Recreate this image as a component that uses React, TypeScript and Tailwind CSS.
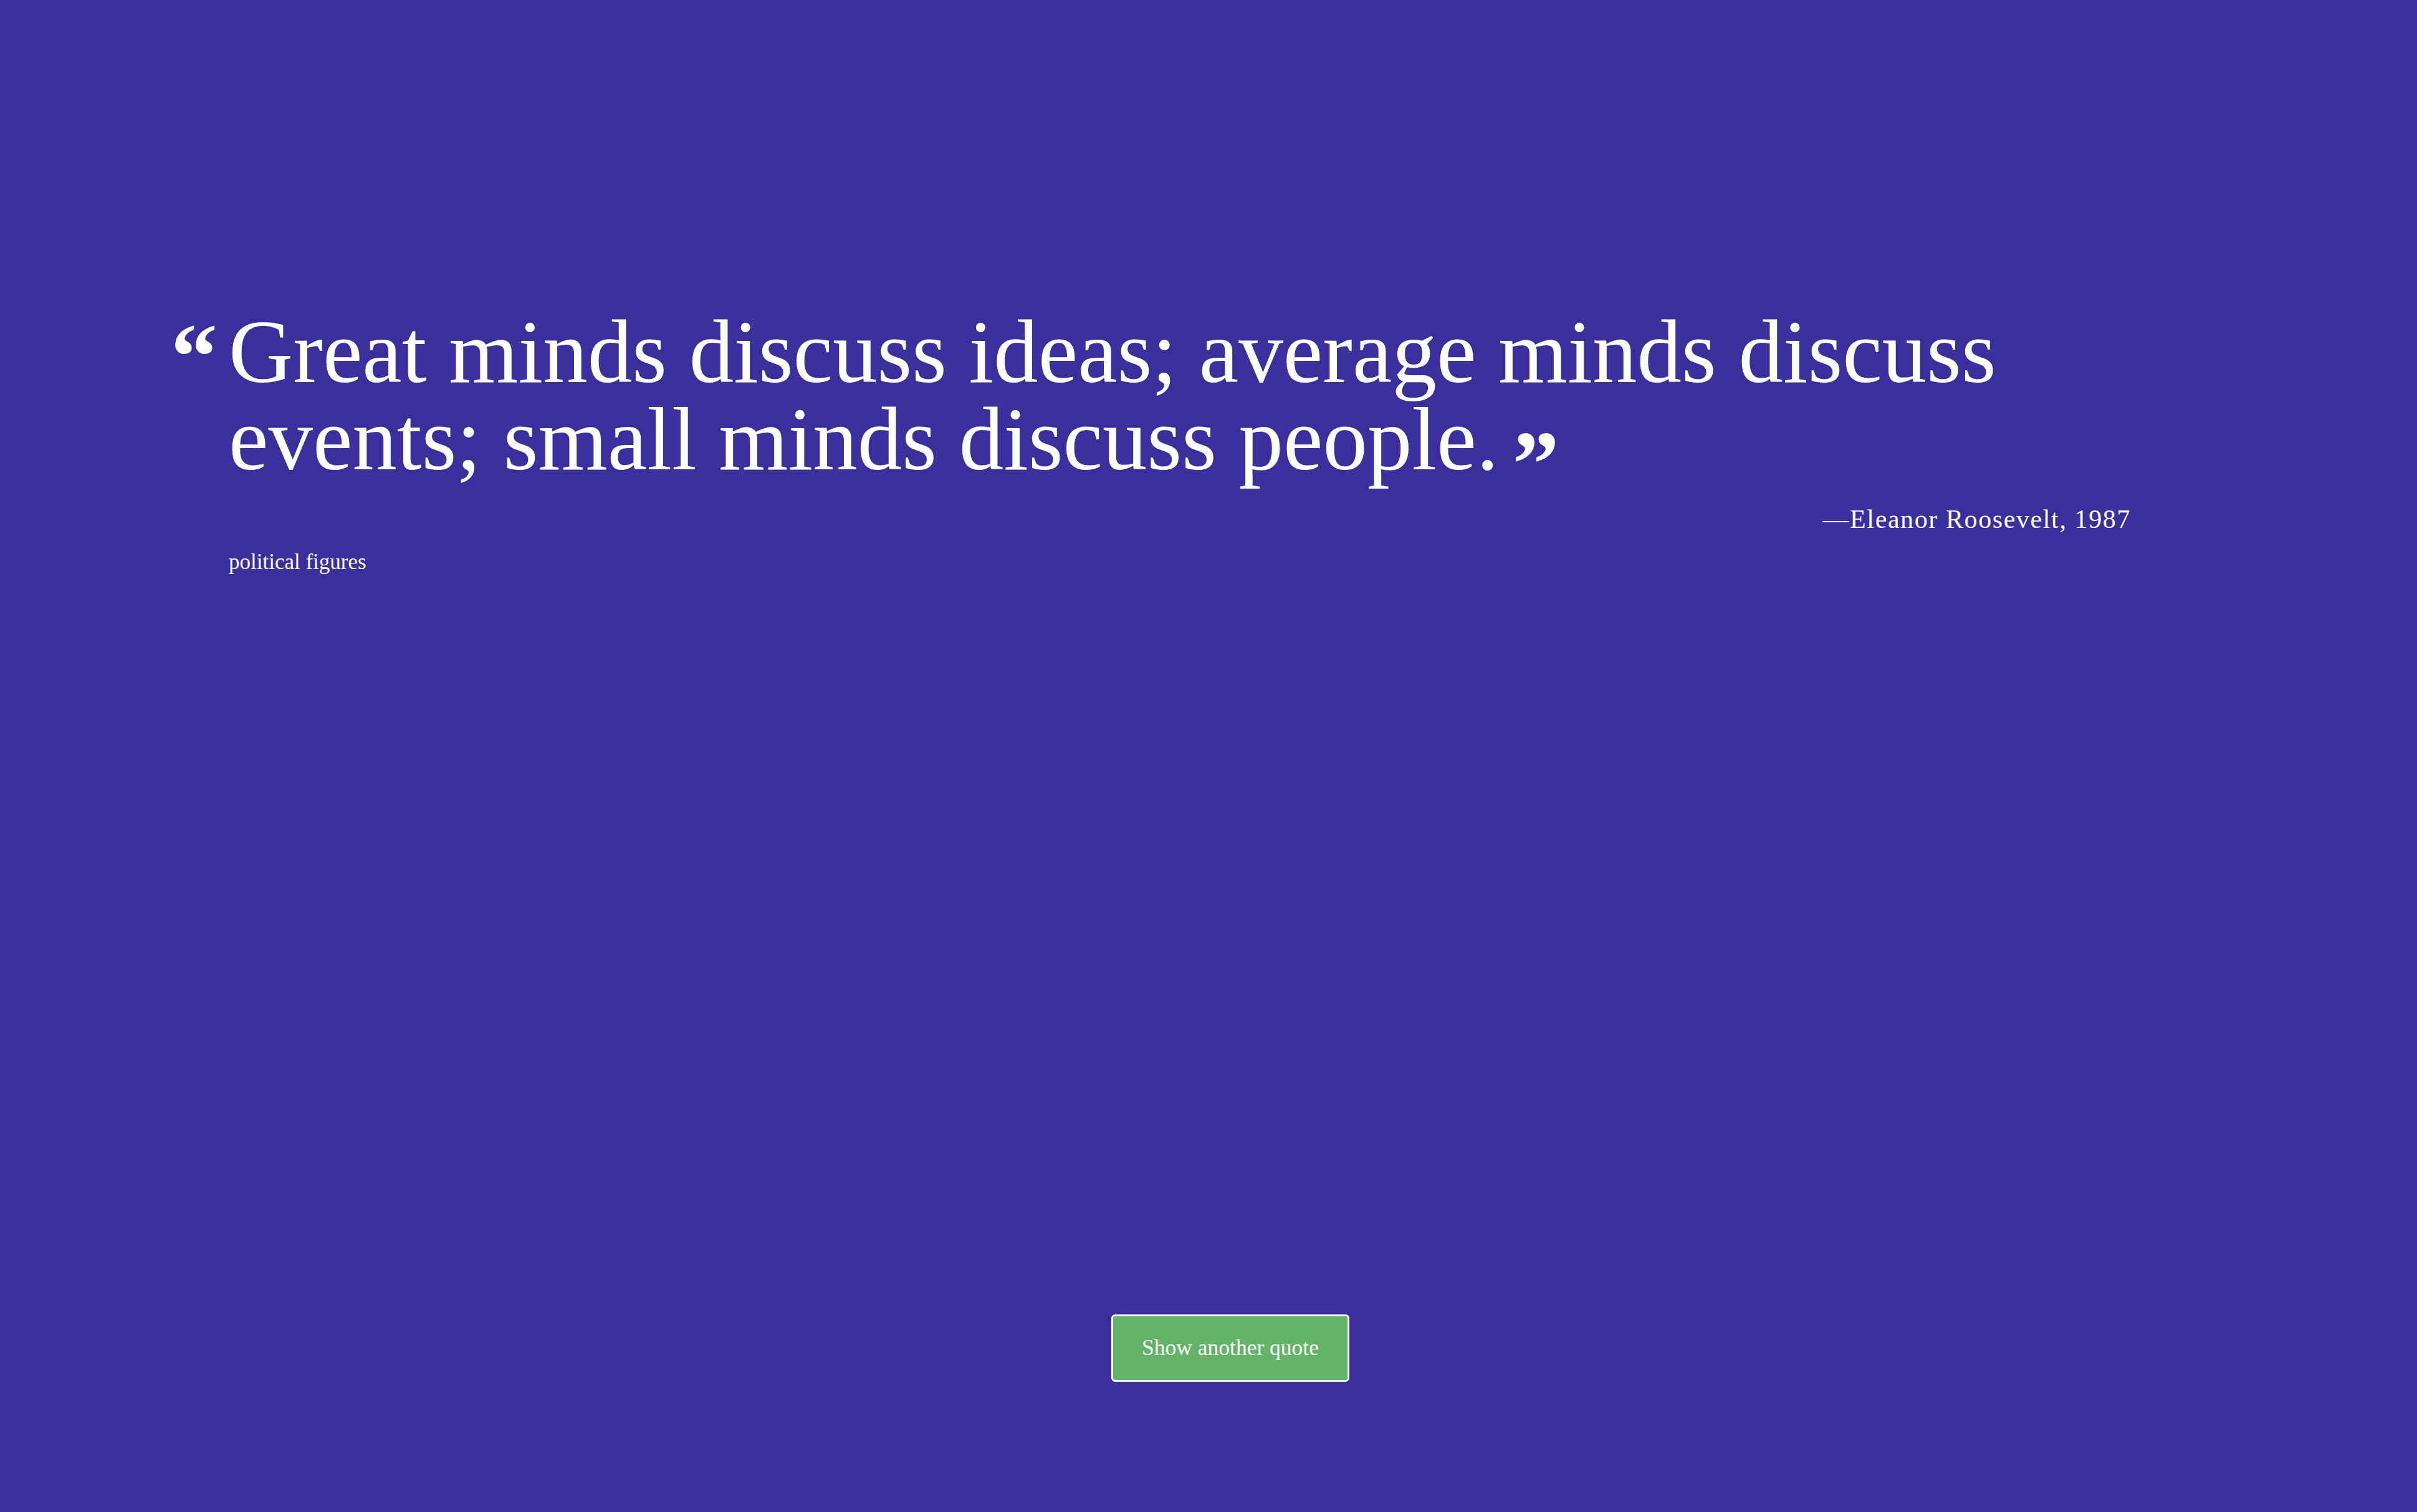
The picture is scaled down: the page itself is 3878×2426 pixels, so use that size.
import React from "react";

export default function App() {
	return (
		<div className="flex h-screen flex-col bg-[#3b2f9d] font-['Liberation_Serif',serif] text-white">
			<section className="flex items-start pl-[274px] pt-[495px]">
				{/* hanging open quote */}
				<span className="mt-[2px] w-[93px] shrink-0 text-[150px] font-bold leading-none">
					“
				</span>
				<div className="w-[3052px]">
					<p className="text-[143px] leading-[140px]">
						Great minds discuss ideas; average minds discuss events; small minds
						discuss people.
						<span className="relative top-[42px] ml-[22px] text-[150px] font-bold leading-[0]">
							”
						</span>
					</p>
					<p className="mt-[27px] text-right text-[42px] leading-[63px] tracking-[1.6px]">
						—Eleanor Roosevelt, 1987
					</p>
					<p className="mt-[17px] text-[35px] leading-[40px]">
						political figures
					</p>
				</div>
			</section>

			<div className="mt-auto flex justify-center pb-[209px] pl-[70px]">
				<button className="h-[108px] w-[382px] rounded-[6px] border-[3px] border-white bg-[#63b369] text-[35.5px] text-white">
					Show another quote
				</button>
			</div>
		</div>
	);
}
